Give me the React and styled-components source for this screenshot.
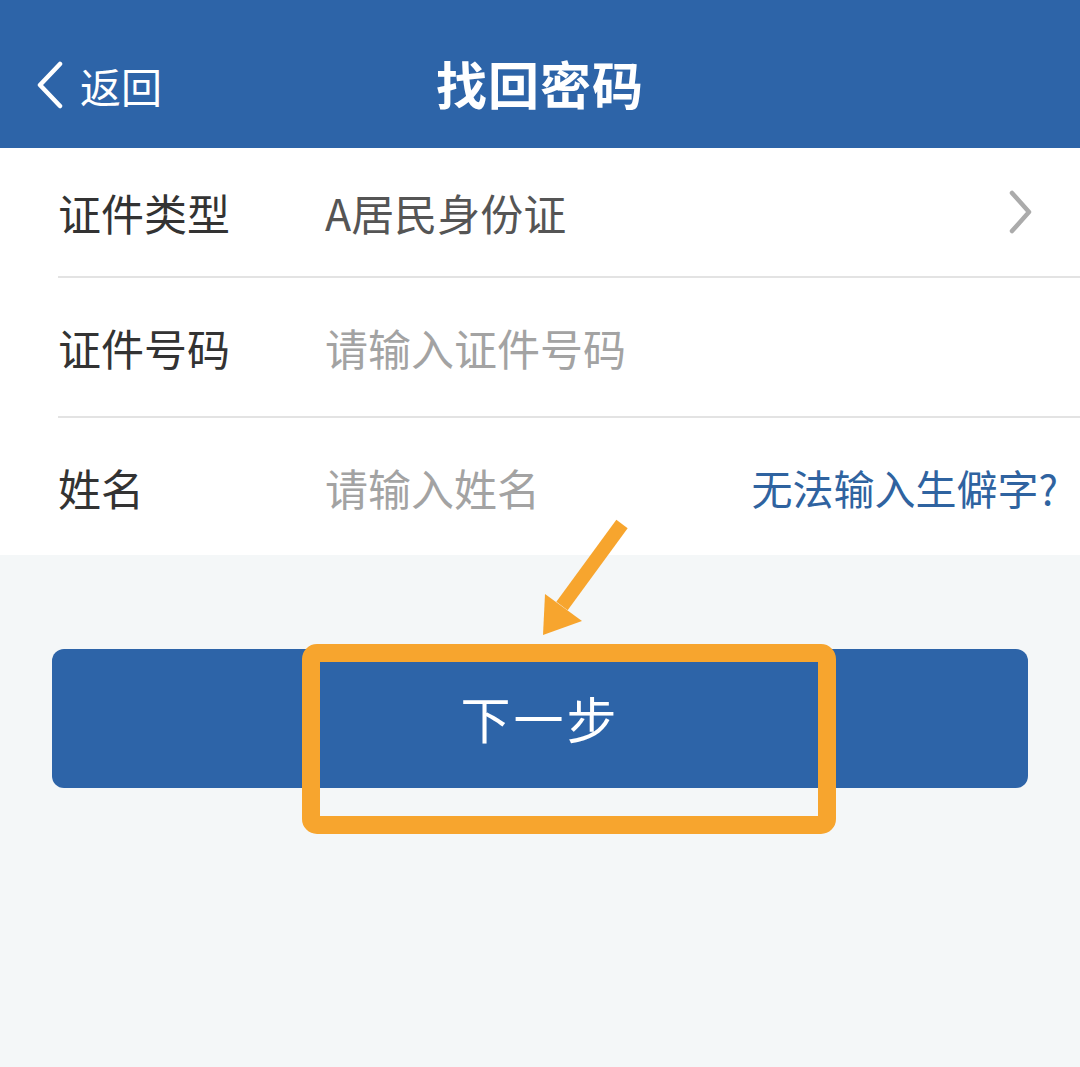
import React from 'react';
import styled, { createGlobalStyle } from 'styled-components';

const GlobalStyle = createGlobalStyle`
  html, body {
    margin: 0;
    padding: 0;
    background: #f4f7f8;
    font-family: "Noto Sans CJK SC", "Noto Sans", sans-serif;
  }
`

const Page = styled.div`
  position: relative;
  width: 1080px;
  height: 1067px;
  background: #f4f7f8;
  overflow: hidden;
`

const NavBar = styled.header`
  height: 148px;
  box-sizing: border-box;
  padding-top: 22px;
  background: #2d64a8;
  display: grid;
  grid-template-columns: 1fr auto 1fr;
  align-items: center;
  color: #fff;
`

const BackButton = styled.div`
  display: flex;
  align-items: center;
  gap: 14px;
  padding-left: 34px;
  font-size: 41px;
  line-height: 1;
`

const Title = styled.h1`
  margin: 0;
  font-size: 51px;
  font-weight: 700;
  letter-spacing: 1px;
  margin-top: -4px;
`

const Form = styled.section`
  background: #fff;
`

const Row = styled.div`
  height: ${p => p.h}px;
  margin-left: 58px;
  display: flex;
  align-items: center;
  border-bottom: ${p => (p.last ? 'none' : '2px solid #e3e3e3')};
  box-sizing: border-box;
  font-size: 43px;
`

const Label = styled.span`
  width: 267px;
  color: #333;
`

const Value = styled.span`
  flex: 1;
  color: ${p => (p.placeholder ? '#a3a3a3' : '#555')};
`

const Link = styled.span`
  color: #2f63a0;
  font-size: 41px;
  padding-right: 22px;
`

const Chevron = styled.svg`
  margin-right: 46px;
`

const Actions = styled.div`
  padding: 94px 52px 0 52px;
`

const NextButton = styled.button`
  width: 976px;
  height: 139px;
  border: none;
  border-radius: 12px;
  background: #2d64a8;
  color: #fff;
  font-family: inherit;
  font-size: 50px;
  display: flex;
  align-items: center;
  justify-content: center;
  padding-bottom: 4px;
  letter-spacing: 3px;
`

const Annotation = styled.svg`
  position: absolute;
  left: 0;
  top: 0;
  pointer-events: none;
`

export default function App() {
  return (
    <Page>
      <GlobalStyle />
      <NavBar>
        <BackButton>
          <svg width="32" height="48" viewBox="0 0 32 48">
            <path d="M26 3 L6 24 L26 45" fill="none" stroke="#fff" strokeWidth="4.5" strokeLinecap="round" strokeLinejoin="round" />
          </svg>
          <span>返回</span>
        </BackButton>
        <Title>找回密码</Title>
        <div />
      </NavBar>
      <Form>
        <Row h={130}>
          <Label>证件类型</Label>
          <Value>A居民身份证</Value>
          <Chevron width="26" height="44" viewBox="0 0 26 44">
            <path d="M4 3 L21 22 L4 41" fill="none" stroke="#ababab" strokeWidth="4.5" strokeLinecap="round" strokeLinejoin="round" />
          </Chevron>
        </Row>
        <Row h={140}>
          <Label>证件号码</Label>
          <Value placeholder>请输入证件号码</Value>
        </Row>
        <Row h={137} last>
          <Label>姓名</Label>
          <Value placeholder>请输入姓名</Value>
          <Link>无法输入生僻字?</Link>
        </Row>
      </Form>
      <Actions>
        <NextButton>下一步</NextButton>
      </Actions>
      <Annotation width="1080" height="1067" viewBox="0 0 1080 1067">
        <line x1="622" y1="524" x2="562" y2="606" stroke="#f7a52e" strokeWidth="14" />
        <polygon points="543,635 545,594 582,621" fill="#f7a52e" />
        <rect x="311" y="653" width="516" height="172" rx="6" fill="none" stroke="#f7a52e" strokeWidth="18" />
      </Annotation>
    </Page>
  );
}
